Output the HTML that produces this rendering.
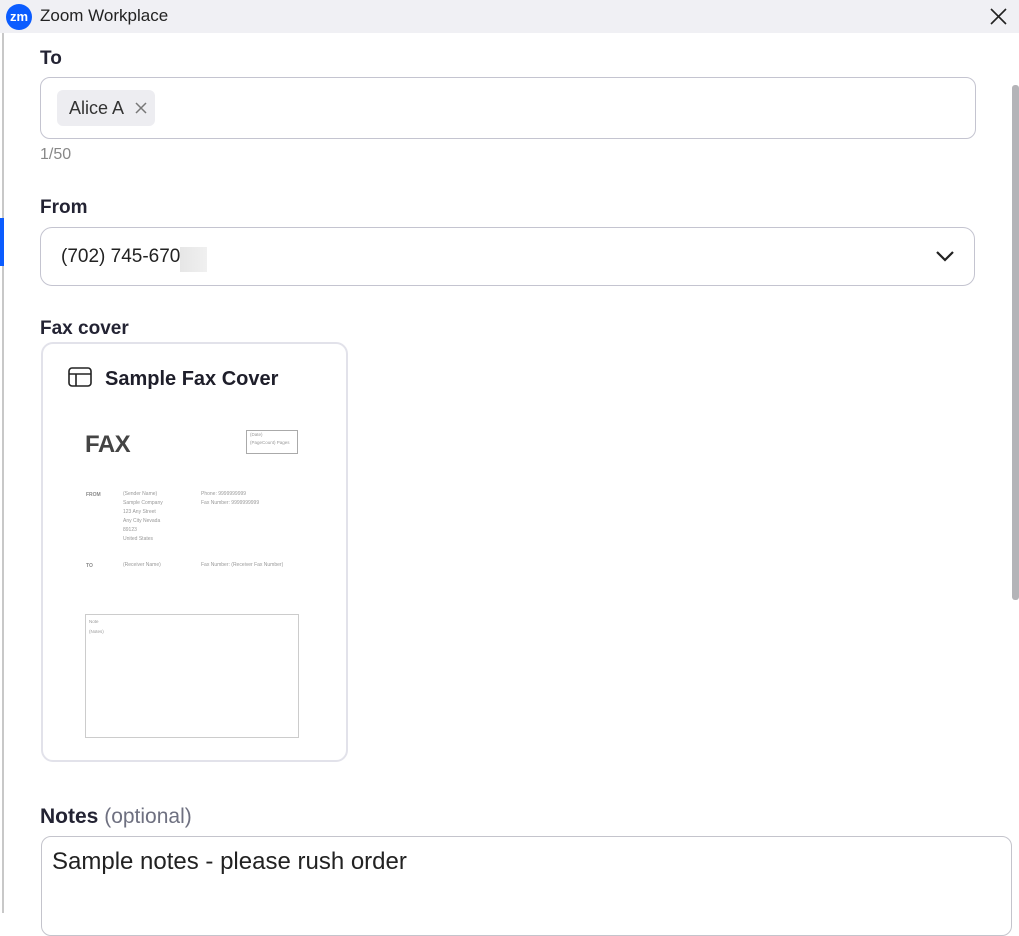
<!DOCTYPE html>
<html><head><meta charset="utf-8"><style>
*{margin:0;padding:0;box-sizing:border-box}
body{width:1019px;height:913px;overflow:hidden;background:#fff;font-family:"Liberation Sans",sans-serif;color:#222;position:relative}
.a{position:absolute}
.lbl{font-size:19px;font-weight:bold;color:#232333}
.s{font-size:5px;color:#999;line-height:9px}
</style></head><body>
<div class="a" style="left:0;top:0;width:1019px;height:33px;background:#f0f0f4"></div>
<div class="a" style="left:6px;top:4px;width:26px;height:26px;border-radius:50%;background:#0b5cff;color:#fff;font-size:13px;font-weight:bold;text-align:center;line-height:25px">zm</div>
<div class="a" style="left:40px;top:6px;font-size:17px;color:#222">Zoom Workplace</div>
<svg class="a" style="left:990px;top:8px" width="17" height="17" viewBox="0 0 17 17"><path d="M1 1L16 16M16 1L1 16" stroke="#222" stroke-width="1.6"/></svg>
<div class="a" style="left:2px;top:33px;width:2px;height:880px;background:#c8c8c8"></div>
<div class="a" style="left:0;top:218px;width:4px;height:48px;background:#0b5cff"></div>
<div class="a" style="left:1012px;top:85px;width:7px;height:515px;background:#b4b4b8;border-radius:3px"></div>

<div class="a lbl" style="left:40px;top:48px">To</div>
<div class="a" style="left:40px;top:77px;width:936px;height:62px;border:1.5px solid #c4c4d0;border-radius:10px"></div>
<div class="a" style="left:57px;top:90px;width:98px;height:36px;background:#ededf1;border-radius:6px"></div>
<div class="a" style="left:69px;top:98px;font-size:18px;color:#333">Alice A</div>
<svg class="a" style="left:135px;top:102px" width="12" height="12" viewBox="0 0 12 12"><path d="M1 1L11 11M11 1L1 11" stroke="#777" stroke-width="1.5"/></svg>
<div class="a" style="left:40px;top:146px;font-size:16px;color:#888">1/50</div>

<div class="a lbl" style="left:40px;top:197px">From</div>
<div class="a" style="left:40px;top:227px;width:935px;height:59px;border:1.5px solid #c4c4d0;border-radius:12px"></div>
<div class="a" style="left:61px;top:246px;font-size:19px;color:#222">(702) 745-670</div>
<div class="a" style="left:180px;top:247px;width:27px;height:25px;background:linear-gradient(90deg,#e6e6e6,#f0f0f0)"></div>
<svg class="a" style="left:935px;top:250px" width="20" height="12" viewBox="0 0 20 12"><path d="M2 2L10 10L18 2" stroke="#222" stroke-width="2.2" fill="none"/></svg>

<div class="a lbl" style="left:40px;top:318px">Fax cover</div>
<div class="a" style="left:41px;top:342px;width:307px;height:420px;border:2px solid #e2e2ea;border-radius:12px"></div>
<svg class="a" style="left:68px;top:367px" width="24" height="20" viewBox="0 0 24 20"><rect x="1" y="1" width="22" height="18" rx="3" fill="none" stroke="#222" stroke-width="1.6"/><path d="M1 7H23M8 7V19" stroke="#222" stroke-width="1.6"/></svg>
<div class="a" style="left:105px;top:368px;font-size:20px;font-weight:bold;color:#1e1e2a">Sample Fax Cover</div>
<div class="a" style="left:85px;top:431px;font-size:24px;font-weight:bold;color:#444;letter-spacing:-0.5px">FAX</div>
<div class="a" style="left:246px;top:430px;width:52px;height:24px;border:1.5px solid #aaa"></div>
<div class="a s" style="left:250px;top:431px;font-size:4.5px;line-height:8px">(Date)<br>(PageCount) Pages</div>
<div class="a s" style="left:86px;top:491px;font-weight:bold;color:#888">FROM</div>
<div class="a s" style="left:123px;top:490px">(Sender Name)<br>Sample Company<br>123 Any Street<br>Any City Nevada<br>89123<br>United States</div>
<div class="a s" style="left:201px;top:490px">Phone: 9999999999<br>Fax Number: 9999999999</div>
<div class="a s" style="left:86px;top:562px;font-weight:bold;color:#888">TO</div>
<div class="a s" style="left:123px;top:561px">(Receiver Name)</div>
<div class="a s" style="left:201px;top:561px">Fax Number: (Receiver Fax Number)</div>
<div class="a" style="left:85px;top:614px;width:214px;height:124px;border:1.5px solid #ccc"></div>
<div class="a s" style="left:89px;top:617px;font-size:4.5px;line-height:10px">Note<br>(Notes)</div>

<div class="a" style="left:40px;top:805px;font-size:21px;color:#232333"><b>Notes</b> <span style="color:#6e7080">(optional)</span></div>
<div class="a" style="left:41px;top:836px;width:971px;height:100px;border:1.5px solid #c4c4cc;border-radius:10px"></div>
<div class="a" style="left:52px;top:848px;font-size:24px;color:#222">Sample notes - please rush order</div>
</body></html>
